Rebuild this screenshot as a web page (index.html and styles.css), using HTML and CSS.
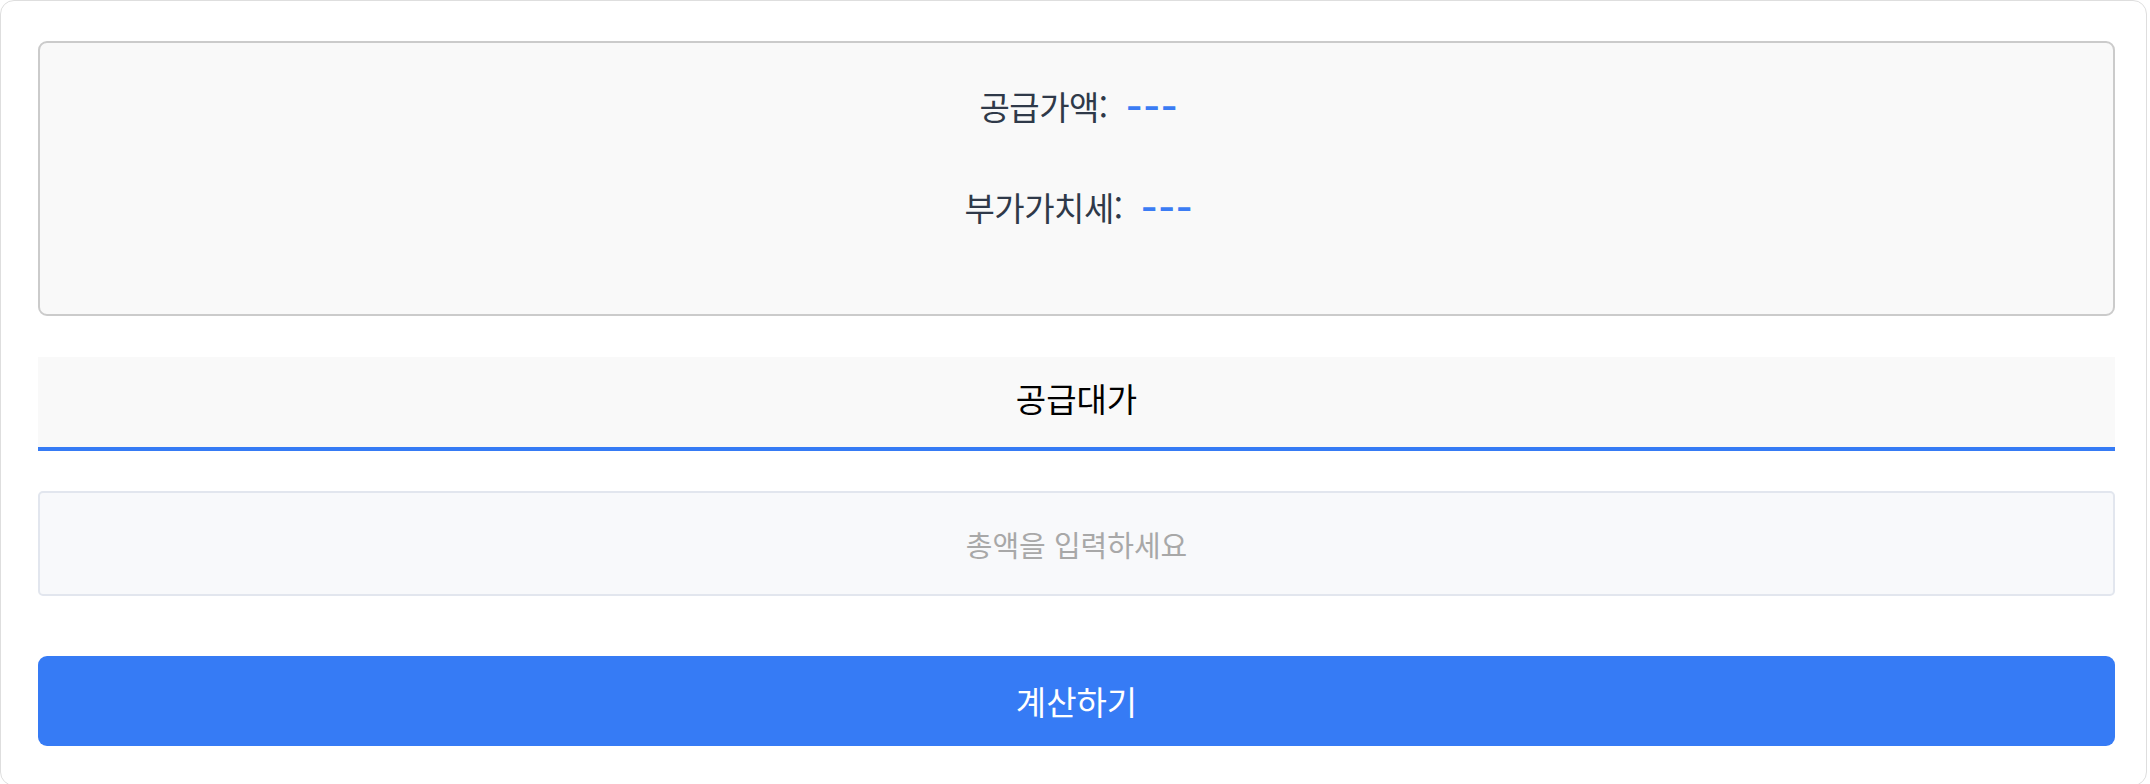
FILE: index.html
```html
<!DOCTYPE html>
<html lang="ko">
<head>
<meta charset="utf-8">
<title>공급가액 계산기</title>
<link rel="stylesheet" href="styles.css">
</head>
<body>
<div class="card">
  <div class="summary">
    <div class="row">공급가액:<span class="val">---</span></div>
    <div class="row">부가가치세:<span class="val">---</span></div>
  </div>
  <div class="tab">공급대가</div>
  <input class="amount" type="text" placeholder="총액을 입력하세요">
  <button class="calc" type="button">계산하기</button>
</div>
</body>
</html>
```

FILE: styles.css
```css
html, body {
  margin: 0;
  padding: 0;
  background: #ffffff;
}
body {
  font-family: "Noto Sans CJK KR", "Noto Sans", sans-serif;
}
.card {
  box-sizing: border-box;
  width: 2147px;
  height: 786px;
  border: 1px solid #dedede;
  border-radius: 14px;
  padding: 40px 31px 0 37px;
  display: flex;
  flex-direction: column;
  background: #ffffff;
}
.summary {
  box-sizing: border-box;
  height: 275px;
  border: 2px solid #cbcbcb;
  border-radius: 9px;
  background: #f9f9f9;
  padding-top: 40px;
  display: flex;
  flex-direction: column;
  align-items: center;
  gap: 54px;
}
.row {
  font-size: 33px;
  line-height: 47px;
  color: #2f3949;
  letter-spacing: -0.5px;
  display: flex;
  align-items: center;
}
.val {
  display: inline-block;
  width: 48px;
  color: #3b7cf4;
  font-weight: 700;
  font-size: 36px;
  margin-left: 18px;
  letter-spacing: 1px;
  transform: scaleX(1.22);
  transform-origin: left center;
}
.tab {
  box-sizing: border-box;
  margin-top: 41px;
  height: 94px;
  background: #f9f9f9;
  border-bottom: 4px solid #367bf5;
  display: flex;
  align-items: center;
  justify-content: center;
  font-size: 33px;
  color: #000000;
  padding-bottom: 8px;
}
.amount {
  box-sizing: border-box;
  margin: 40px 0 0 0;
  height: 105px;
  width: 100%;
  border: 2px solid #e2e6ee;
  border-radius: 5px;
  background: #f8f9fb;
  font-family: "Noto Sans CJK KR", "Noto Sans", sans-serif;
  font-size: 29px;
  text-align: center;
  color: #333d4b;
  outline: none;
}
.amount::placeholder {
  color: #a8a8a8;
}
.calc {
  box-sizing: border-box;
  margin-top: 60px;
  height: 90px;
  width: 100%;
  border: none;
  border-radius: 9px;
  background: #367bf5;
  color: #ffffff;
  font-family: "Noto Sans CJK KR", "Noto Sans", sans-serif;
  font-size: 33px;
}
```
